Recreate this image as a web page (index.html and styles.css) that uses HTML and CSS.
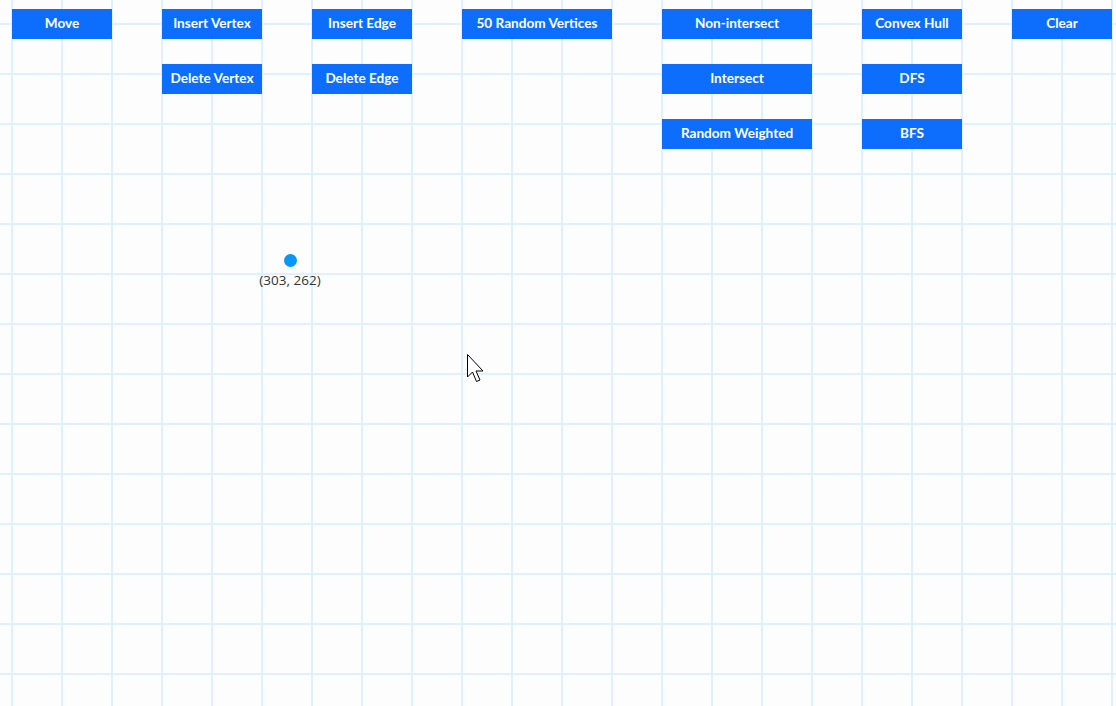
FILE: index.html
```html
<!DOCTYPE html>
<html>
<head>
<meta charset="utf-8">
<link rel="stylesheet" href="styles.css">
</head>
<body>
<div class="toolbar">
  <div class="col"><button class="btn">Move</button></div>
  <div class="col"><button class="btn">Insert Vertex</button><button class="btn">Delete Vertex</button></div>
  <div class="col"><button class="btn">Insert Edge</button><button class="btn">Delete Edge</button></div>
  <div class="col wide"><button class="btn">50 Random Vertices</button></div>
  <div class="col wide"><button class="btn">Non-intersect</button><button class="btn">Intersect</button><button class="btn">Random Weighted</button></div>
  <div class="col"><button class="btn">Convex Hull</button><button class="btn">DFS</button><button class="btn">BFS</button></div>
  <div class="col"><button class="btn">Clear</button></div>
</div>
<div class="vertex" style="left:283.5px;top:253.5px"></div>
<div class="label" style="left:290px;top:271px">(303, 262)</div>
<svg class="cursor" width="20" height="32" viewBox="0 0 20 32">
  <path d="M0.5 0.5 L0.5 23 L5.5 18 L9.5 27.5 L13 26 L9 17 L16 17 Z" fill="#fff" stroke="#000" stroke-width="1" stroke-linejoin="miter"/>
</svg>
</body>
</html>
```
FILE: styles.css
```css
html, body {
  margin: 0;
  padding: 0;
  height: 100%;
}
body {
  background-color: #fdfdfd;
  background-image:
    linear-gradient(to right, #dff1fc 0, #dff1fc 2px, transparent 2px),
    linear-gradient(to bottom, #dff1fc 0, #dff1fc 2px, transparent 2px);
  background-size: 50px 50px, 50px 50px;
  background-position: 11px 0, 0 23px;
  position: relative;
  overflow: hidden;
  font-family: Lato, "Open Sans", sans-serif;
}
.toolbar {
  display: flex;
  gap: 50px;
  padding: 9px 0 0 12px;
  align-items: flex-start;
}
.col {
  display: flex;
  flex-direction: column;
  gap: 25px;
  width: 100px;
}
.col.wide {
  width: 150px;
}
.btn {
  height: 30px;
  width: 100%;
  border: none;
  margin: 0;
  padding: 0 0 2px 0;
  background: #0d6efd;
  color: #fff;
  font-family: Lato, "Open Sans", sans-serif;
  font-weight: 700;
  font-size: 13.6px;
}
.vertex {
  position: absolute;
  width: 13px;
  height: 13px;
  border-radius: 50%;
  background: #0896f7;
}
.label {
  position: absolute;
  transform: translateX(-50%);
  font-family: "Open Sans", sans-serif;
  font-size: 13.5px;
  color: #333;
  white-space: nowrap;
}
.cursor {
  position: absolute;
  left: 467px;
  top: 354px;
}
```
